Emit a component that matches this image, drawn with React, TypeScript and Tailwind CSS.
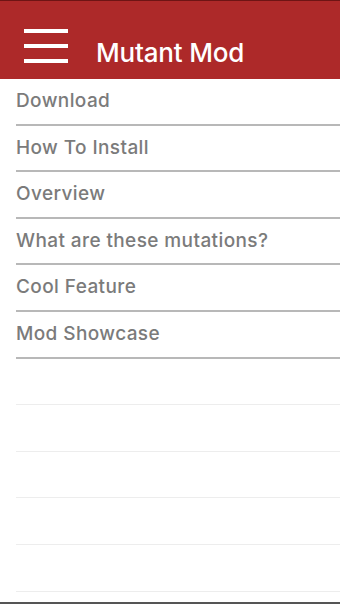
export default function App() {
  const items = [
    "Download",
    "How To Install",
    "Overview",
    "What are these mutations?",
    "Cool Feature",
    "Mod Showcase",
  ];

  return (
    <div
      className="flex h-[604px] w-[340px] flex-col overflow-hidden border-b-2 border-[#555555] bg-white"
      style={{ fontFamily: "Inter, 'Noto Sans', sans-serif" }}
    >
      {/* top bar */}
      <div className="flex h-[79px] shrink-0 items-center border-t border-[#6e1414] bg-[#ad2929] pl-6 pt-[12px]">
        <div className="flex w-[44px] flex-col gap-[11px]">
          <span className="block h-[4px] bg-white" />
          <span className="block h-[4px] bg-white" />
          <span className="block h-[4px] bg-white" />
        </div>
        <h1 className="ml-7 mt-[13px] text-[26px] font-medium tracking-[-0.2px] text-white">Mutant Mod</h1>
      </div>

      {/* menu */}
      <ul className="flex flex-col pl-4">
        {items.map((item) => (
          <li
            key={item}
            className="flex h-[46.6px] items-center border-b-2 border-[#b8b8b8] text-[19px] font-medium tracking-[0.4px] text-[#7b7b7b]"
          >
            {item}
          </li>
        ))}
        {[0, 1, 2, 3, 4].map((i) => (
          <li key={i} className="h-[46.6px] border-b border-[#ededed]" />
        ))}
      </ul>
    </div>
  );
}
